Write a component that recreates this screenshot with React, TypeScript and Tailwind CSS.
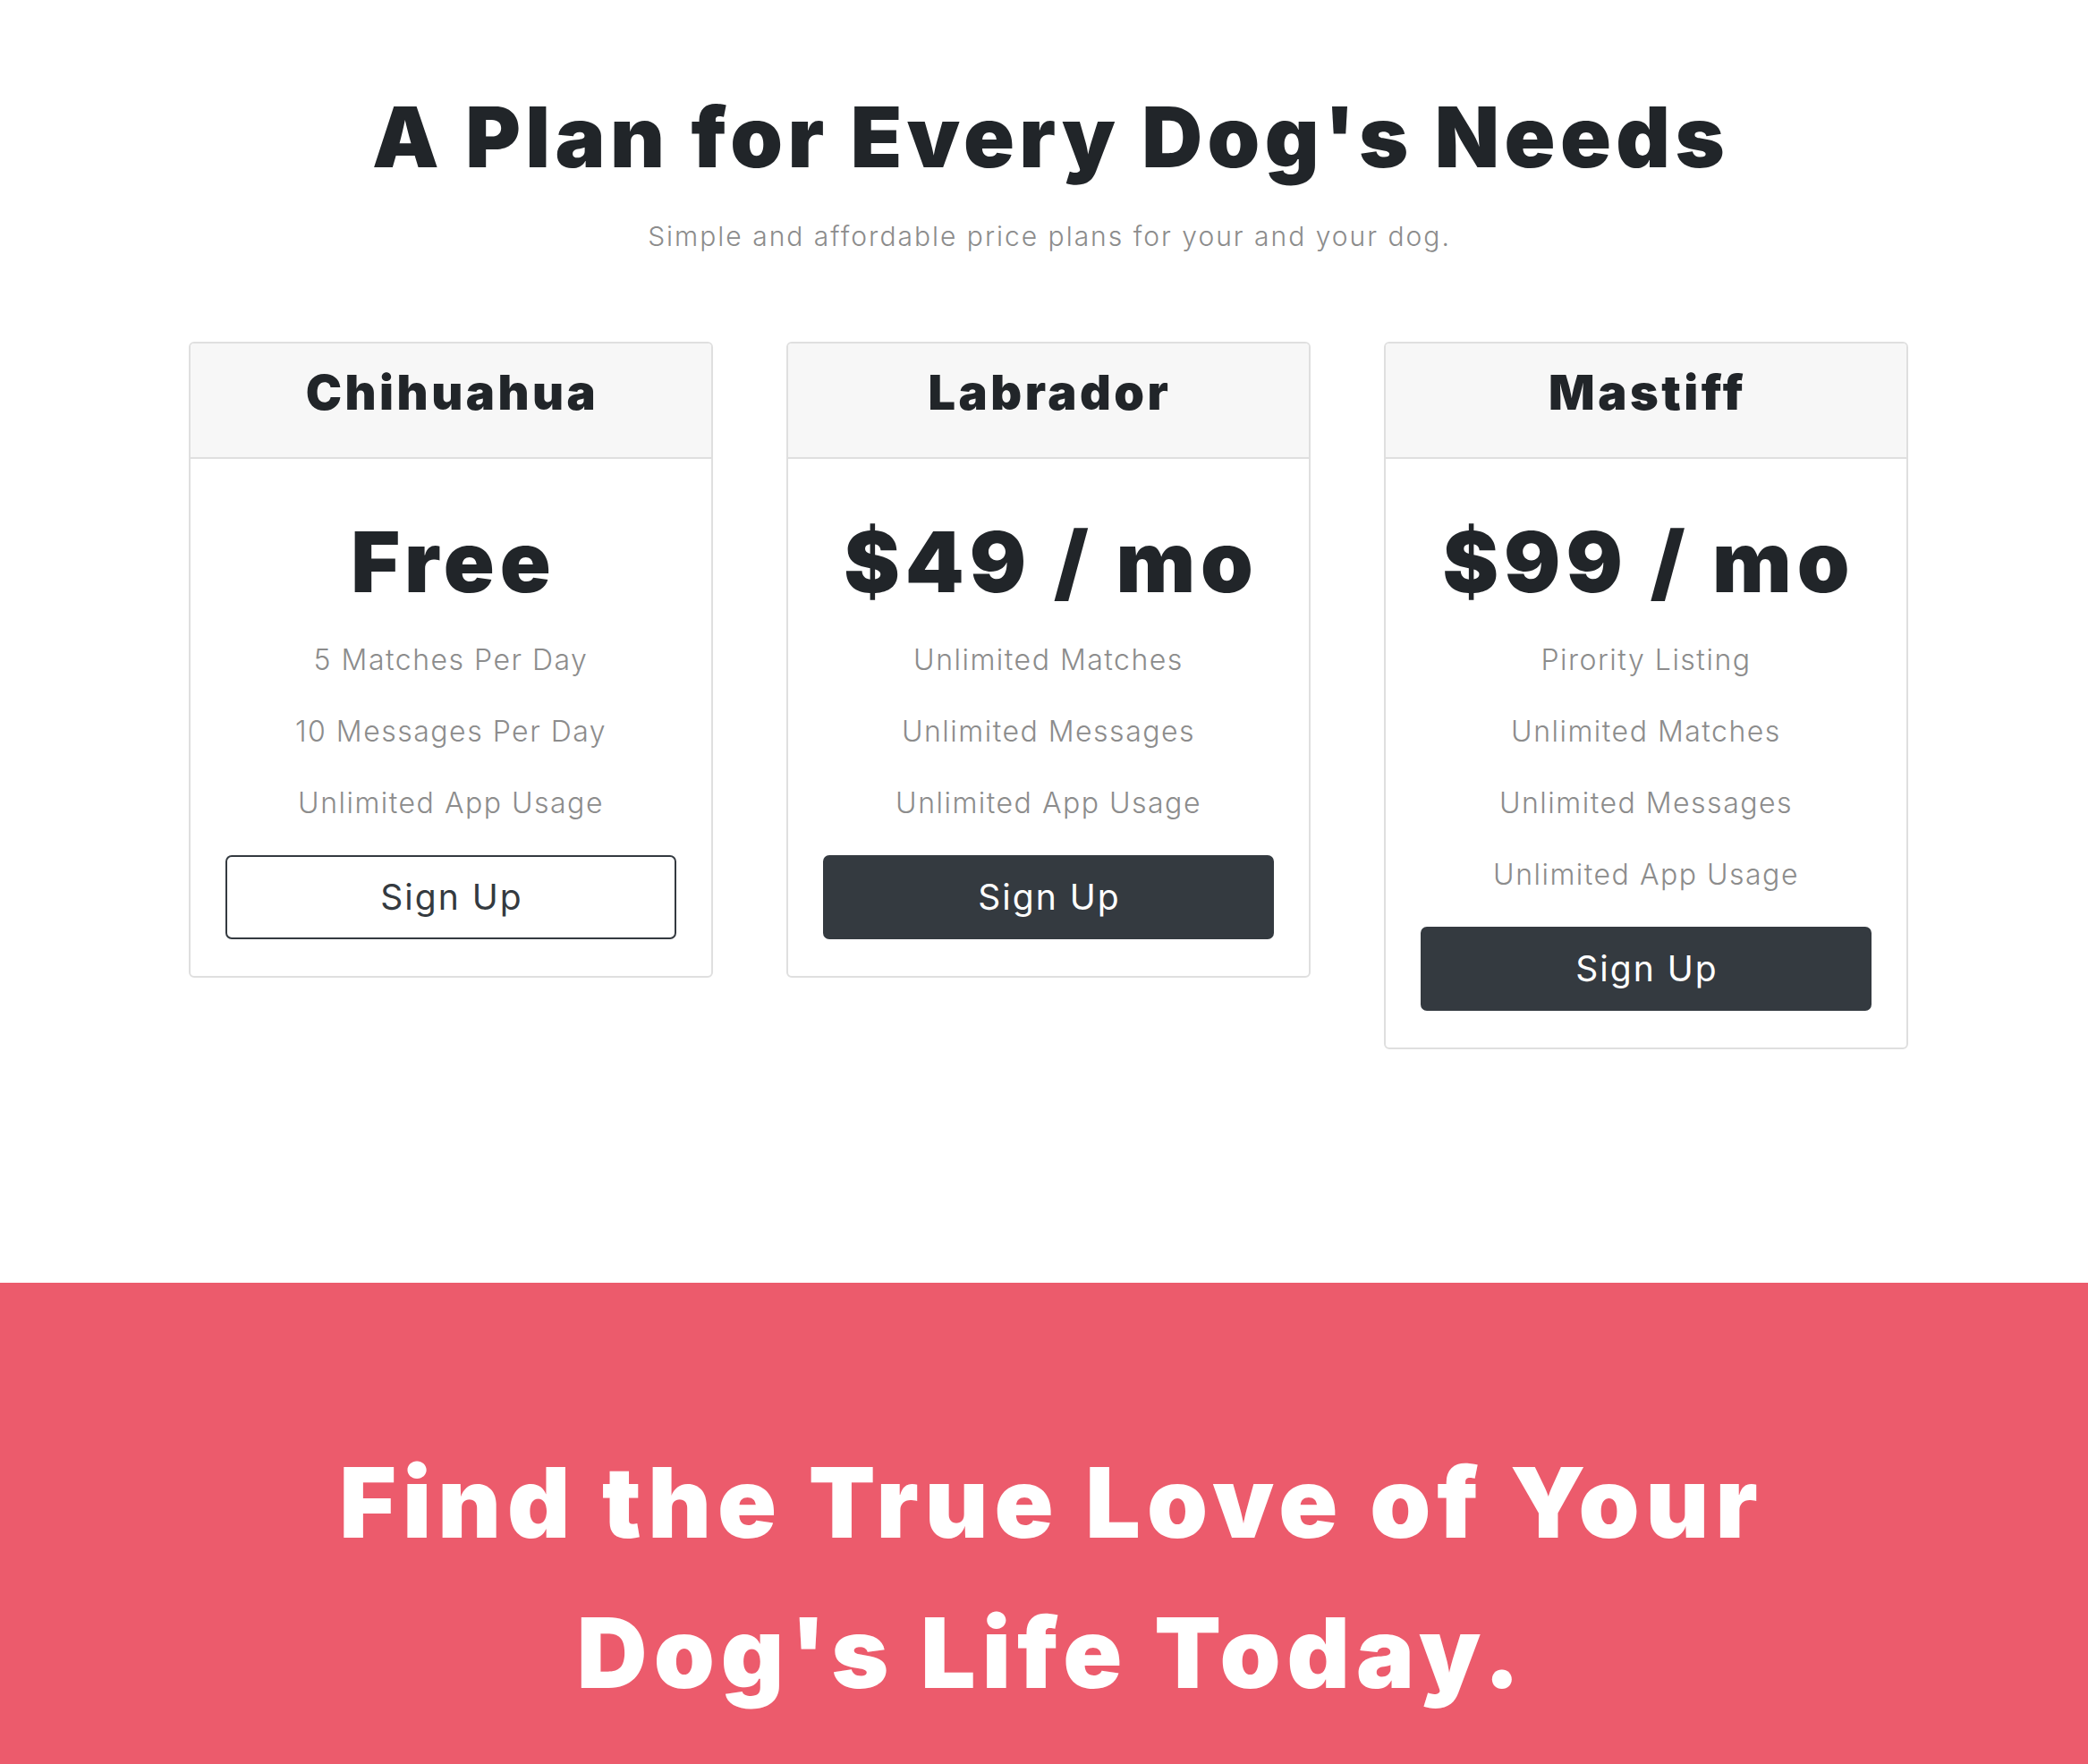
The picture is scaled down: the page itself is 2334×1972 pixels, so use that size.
import React from "react";

type Plan = {
  name: string;
  price: string;
  features: string[];
  dark: boolean;
};

const plans: Plan[] = [
  {
    name: "Chihuahua",
    price: "Free",
    features: ["5 Matches Per Day", "10 Messages Per Day", "Unlimited App Usage"],
    dark: false,
  },
  {
    name: "Labrador",
    price: "$49 / mo",
    features: ["Unlimited Matches", "Unlimited Messages", "Unlimited App Usage"],
    dark: true,
  },
  {
    name: "Mastiff",
    price: "$99 / mo",
    features: ["Pirority Listing", "Unlimited Matches", "Unlimited Messages", "Unlimited App Usage"],
    dark: true,
  },
];

function PlanCard({ plan }: { plan: Plan }) {
  return (
    <div className="w-[586px] overflow-hidden rounded-[6px] border-2 border-[#dfdfdf] bg-white">
      <div className="h-[129px] border-b-2 border-[#dfdfdf] bg-[#f7f7f7] pt-[28px] text-center">
        <h3 className="pl-[3px] text-[54px] font-black leading-none tracking-[3.5px]">{plan.name}</h3>
      </div>
      <div className="px-[39px] pt-[68px] pb-[41px] text-center">
        <h2 className="pl-[6px] text-[94px] font-black leading-none tracking-[6px]">{plan.price}</h2>
        <ul className="mt-[23px] text-[32px] font-light leading-[80px] tracking-[1.5px] text-[#8c8c8c]">
          {plan.features.map((f) => (
            <li key={f}>{f}</li>
          ))}
        </ul>
        <button
          className={
            plan.dark
              ? "mt-[18px] flex h-[94px] w-full items-center justify-center rounded-[7px] border-2 border-[#343a40] bg-[#343a40] pl-[2px] text-[39px] font-normal tracking-[2px] text-white"
              : "mt-[18px] flex h-[94px] w-full items-center justify-center rounded-[7px] border-2 border-[#343a40] bg-white pl-[2px] text-[39px] font-normal tracking-[2px] text-[#343a40]"
          }
        >
          Sign Up
        </button>
      </div>
    </div>
  );
}

export default function App() {
  return (
    <div className="min-h-screen bg-white font-['Inter',sans-serif] text-[#212529]">
      <section className="pt-[97px]">
        <div className="ml-[211px] w-[1922px] text-center">
          <h1 className="pl-[5px] text-[94px] font-black leading-[1.2] tracking-[5.4px]">
            A Plan for Every Dog's Needs
          </h1>
          <p className="mt-[32px] pl-[2px] text-[30px] font-light leading-[1.5] tracking-[2px] text-[#8c8c8c]">
            Simple and affordable price plans for your and your dog.
          </p>
        </div>
        <div className="ml-[211px] mt-[95px] flex w-[1922px] items-start gap-[82px]">
          {plans.map((p) => (
            <PlanCard key={p.name} plan={p} />
          ))}
        </div>
      </section>
      <section className="mt-[261px] bg-[#ec5b6c] pt-[161px] pb-[164px]">
        <div className="ml-[211px] w-[1922px] text-center">
          <h2 className="pl-[7px] text-[109px] font-black leading-[168px] tracking-[7px] text-white">
            Find the True Love of Your
            <br />
            Dog's Life Today.
          </h2>
        </div>
      </section>
    </div>
  );
}
